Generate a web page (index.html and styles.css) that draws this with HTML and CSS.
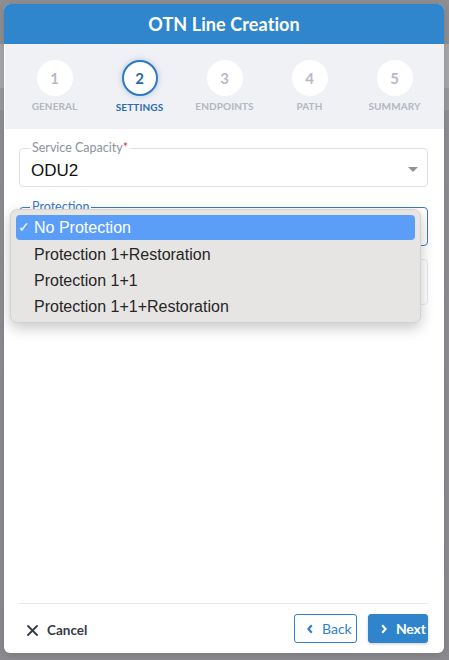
FILE: index.html
```html
<!DOCTYPE html>
<html>
<head>
<meta charset="utf-8">
<link rel="stylesheet" href="styles.css">
</head>
<body>
<div class="backdrop">
  <div class="dialog">
    <div class="dialog-header">OTN Line Creation</div>
    <div class="stepper">
      <div class="step"><div class="step-circle">1</div><div class="step-label">General</div></div>
      <div class="step active"><div class="step-circle">2</div><div class="step-label">Settings</div></div>
      <div class="step"><div class="step-circle">3</div><div class="step-label">Endpoints</div></div>
      <div class="step"><div class="step-circle">4</div><div class="step-label">Path</div></div>
      <div class="step"><div class="step-circle">5</div><div class="step-label">Summary</div></div>
    </div>
    <div class="dialog-body">
      <fieldset class="field">
        <legend class="field-label">Service Capacity<span class="req">*</span></legend>
        <div class="field-value">ODU2</div>
        <span class="caret"></span>
      </fieldset>
      <div class="field-wrap">
        <fieldset class="field focused">
          <legend class="field-label">Protection</legend>
          <div class="field-value"></div>
        </fieldset>
        <div class="menu">
          <div class="menu-item selected"><span class="check">✓</span><span>No Protection</span></div>
          <div class="menu-item"><span class="check"></span><span>Protection 1+Restoration</span></div>
          <div class="menu-item"><span class="check"></span><span>Protection 1+1</span></div>
          <div class="menu-item"><span class="check"></span><span>Protection 1+1+Restoration</span></div>
        </div>
      </div>
      <fieldset class="field disabled">
        <legend class="field-label empty"></legend>
        <div class="field-value"></div>
      </fieldset>
    </div>
    <div class="dialog-footer">
      <button class="btn-cancel">
        <svg width="11" height="11" viewBox="0 0 11 11"><path d="M1 1 L10 10 M10 1 L1 10" stroke="#353b47" stroke-width="1.8" stroke-linecap="round"/></svg>
        Cancel
      </button>
      <div class="nav-buttons">
        <button class="btn btn-back">
          <svg width="6" height="10" viewBox="0 0 6 10"><path d="M4.8 1.2 L1.4 5 L4.8 8.8" fill="none" stroke="#2f7fc4" stroke-width="2.1"/></svg>
          <span>Back</span>
        </button>
        <button class="btn btn-next">
          <svg width="6" height="10" viewBox="0 0 6 10"><path d="M1.2 1.2 L4.6 5 L1.2 8.8" fill="none" stroke="#ffffff" stroke-width="2.1"/></svg>
          <span>Next</span>
        </button>
      </div>
    </div>
  </div>
</div>
</body>
</html>
```
FILE: styles.css
```css
* { box-sizing: border-box; }
html, body { margin: 0; padding: 0; }
body {
  font-family: Lato, "Open Sans", sans-serif;
  background: linear-gradient(to bottom, #8f8f93 0, #8f8f93 44px, #a8a8ab 44px, #a8a8ab 88px, #9a9a9d 88px, #9a9a9d 110px, #909094 110px, #8c8c90 100%);
  width: 449px;
  height: 660px;
  overflow: hidden;
}
.backdrop {
  padding: 4px 5px 7px 4px;
  height: 660px;
}
.dialog {
  width: 440px;
  height: 649px;
  background: #fff;
  border-radius: 6px;
  overflow: hidden;
  display: flex;
  flex-direction: column;
  box-shadow: 0 2px 8px rgba(0,0,0,0.15);
}
.dialog-header {
  height: 40px;
  background: #2f86cc;
  color: #fff;
  font-size: 18px;
  font-weight: 700;
  display: flex;
  align-items: center;
  justify-content: center;
  letter-spacing: 0.1px;
}
.stepper {
  height: 85px;
  background: #f0f1f5;
  display: grid;
  grid-template-columns: repeat(5, 85px);
  justify-content: center;
  padding-top: 16px;
  margin-left: 1px;
}
.step {
  display: flex;
  flex-direction: column;
  align-items: center;
}
.step-circle {
  width: 36px;
  height: 36px;
  border-radius: 50%;
  background: #fff;
  color: #b7bbc5;
  font-size: 15px;
  font-weight: 700;
  display: flex;
  align-items: center;
  justify-content: center;
}
.step-label {
  margin-top: 4px;
  font-size: 10px;
  font-weight: 700;
  color: #b3b7c2;
  text-transform: uppercase;
  letter-spacing: 0.1px;
}
.step.active .step-circle {
  border: 2px solid #2f79c0;
  color: #2a68a8;
  box-shadow: 0 0 6px rgba(47,121,192,0.35);
}
.step.active .step-label {
  color: #2c6cae;
  margin-top: 5px;
}
.dialog-body {
  flex: 1;
  padding: 12px 16px 0 15px;
  display: flex;
  flex-direction: column;
  gap: 13px;
}
.field {
  position: relative;
  margin: 0;
  height: 46px;
  border: 1px solid #dfe1e6;
  border-radius: 4px;
  padding: 0 11px;
  min-width: 0;
}
.field-label {
  font-size: 12.5px;
  color: #8d929c;
  padding: 0 2px;
  margin-left: -1px;
  line-height: 14px;
}
.field-label.empty { padding: 0; }
.req { color: #d9363e; }
.field-value {
  font-family: "Liberation Sans", Arial, sans-serif;
  font-size: 17px;
  color: #111;
  height: 24px;
  line-height: 24px;
  margin-top: 4px;
}
.caret {
  position: absolute;
  right: 9px;
  top: 12px;
  width: 0;
  height: 0;
  border-left: 5px solid transparent;
  border-right: 5px solid transparent;
  border-top: 5px solid #8f939c;
}
.field.focused { border-color: #3a7bbf; }
.field.focused .field-label { color: #3a7bbf; }
.field.disabled { border-color: #e8e9ec; }
.field-wrap { position: relative; }
.menu {
  position: absolute;
  left: -9px;
  top: 9px;
  width: 411px;
  height: 114px;
  background: #e6e5e4;
  border: 1px solid #d3d2d1;
  border-radius: 7px;
  box-shadow: 0 5px 14px rgba(0,0,0,0.22);
  padding: 5px 5px 0 5px;
  font-family: "Liberation Sans", Arial, sans-serif;
  font-size: 16px;
  color: #262626;
  z-index: 2;
}
.menu-item {
  height: 26px;
  line-height: 25px;
  padding-left: 2px;
  border-radius: 4px;
  display: flex;
  align-items: center;
}
.menu-item.selected {
  background: #5a9ef8;
  color: #fff;
  height: 25px;
  margin-bottom: 1px;
}
.check {
  width: 16px;
  flex-shrink: 0;
  font-size: 14px;
}
.dialog-footer {
  margin: 0 16px 0 15px;
  border-top: 1px solid #e8e9ed;
  height: 50px;
  display: flex;
  align-items: flex-start;
  justify-content: space-between;
  padding-top: 10px;
}
.btn-cancel {
  background: none;
  border: none;
  padding: 0 0 0 8px;
  margin-top: 8px;
  font-family: Lato, "Open Sans", sans-serif;
  font-size: 13.5px;
  font-weight: 700;
  color: #353b47;
  display: flex;
  align-items: center;
  gap: 9px;
}
.nav-buttons {
  display: flex;
  gap: 11px;
}
.btn {
  height: 29px;
  border-radius: 3px;
  font-family: Lato, "Open Sans", sans-serif;
  font-size: 14px;
  display: flex;
  align-items: center;
  gap: 9px;
  padding: 0 0 0 12px;
}
.btn svg { flex-shrink: 0; }
.btn-back {
  width: 63px;
  background: #fff;
  border: 1px solid #2f7fc4;
  color: #2f7fc4;
}
.btn-next {
  width: 60px;
  background: #2f84cc;
  border: 1px solid #2f84cc;
  color: #fff;
  font-weight: 700;
  letter-spacing: -0.2px;
  box-shadow: 0 1px 3px rgba(0,0,0,0.2);
}
```
